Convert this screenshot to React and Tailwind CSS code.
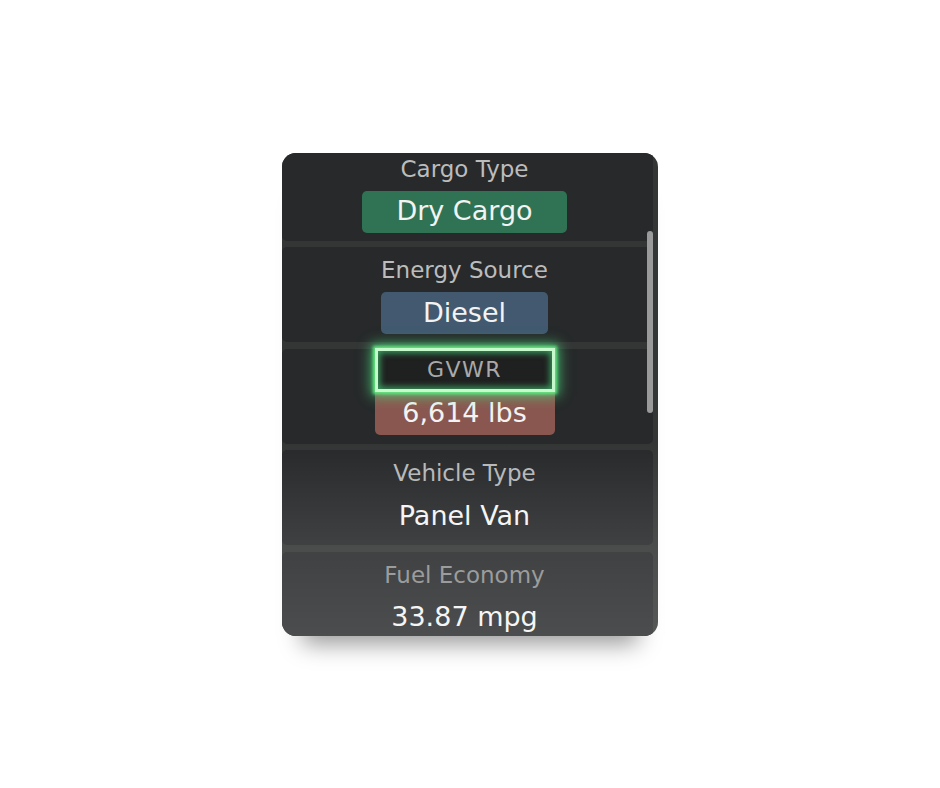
import React from "react";

const FONT = { fontFamily: '"DejaVu Sans", "Liberation Sans", sans-serif' };

// ── Pieces ────────────────────────────────────────────────────
function Label({ children, className = "" }) {
  return (
    <div className={`relative z-[2] h-[30px] leading-[30px] text-[23px] text-center ${className}`}>
      {children}
    </div>
  );
}

function Pill({ children, className = "" }) {
  return (
    <div className={`mx-auto mt-[7px] h-[42px] rounded-[5px] flex items-center justify-center text-[27px] text-[#f3f3f3] ${className}`}>
      {children}
    </div>
  );
}

function Card({ children, className = "" }) {
  return (
    <div className={`h-[95px] shrink-0 rounded-[5px] bg-[#27292a] pt-2 pr-[6px] ${className}`}>
      {children}
    </div>
  );
}

// ── Main ──────────────────────────────────────────────────────
export default function App() {
  return (
    <div className="h-screen w-full bg-white flex items-center justify-center" style={FONT}>
      <div className="relative w-[376px] h-[483px] rounded-[14px] overflow-hidden bg-[#343636] shadow-[0_28px_22px_-20px_rgba(0,0,0,0.4)]">
        <div className="-mt-[7px] pr-[5px] flex flex-col gap-[6.5px]">
          <Card>
            <Label className="text-[#bcbcbc]">Cargo Type</Label>
            <Pill className="w-[205px] bg-[#2f7354]">Dry Cargo</Pill>
          </Card>

          <Card>
            <Label className="text-[#bcbcbc]">Energy Source</Label>
            <Pill className="w-[167px] bg-[#42596f]">Diesel</Pill>
          </Card>

          {/* highlighted field */}
          <Card className="!pt-0">
            <div className="relative z-[3] mx-auto -mt-px w-[180px] h-[44px] border-[3px] border-[#c6f9cc] bg-[#1f2020] flex items-center justify-center text-[22px] tracking-[1.5px] text-[#a9a9a9] shadow-[0_0_3px_2px_rgba(100,235,130,0.95),0_0_12px_4px_rgba(74,222,128,0.75),inset_0_0_6px_2px_rgba(74,222,128,0.65)]">
              GVWR
            </div>
            <div className="mx-auto h-[43px] w-[180px] rounded-b-[5px] bg-[#8a5750] flex items-center justify-center text-[27px] text-[#f3f3f3]">
              6,614 lbs
            </div>
          </Card>

          <Card>
            <Label className="text-[#b9b9b9]">Vehicle Type</Label>
            <div className="relative z-[2] mt-[7px] h-[42px] flex items-center justify-center text-[27px] text-[#f5f5f5]">
              Panel Van
            </div>
          </Card>

          <Card>
            <Label className="text-[#9c9c9c]">Fuel Economy</Label>
            <div className="relative z-[2] mt-[7px] h-[42px] flex items-center justify-center text-[27px] text-[#f5f5f5]">
              33.87 mpg
            </div>
          </Card>
        </div>

        {/* bottom fade */}
        <div className="pointer-events-none absolute inset-0 z-[1] bg-[linear-gradient(to_bottom,transparent_60%,rgba(255,255,255,0.11)_81%,rgba(255,255,255,0.17)_100%)]" />

        {/* scrollbar thumb */}
        <div className="absolute z-[4] right-[5px] top-[78px] w-[6px] h-[182px] rounded-full bg-[#9a9a9a]" />
      </div>
    </div>
  );
}
